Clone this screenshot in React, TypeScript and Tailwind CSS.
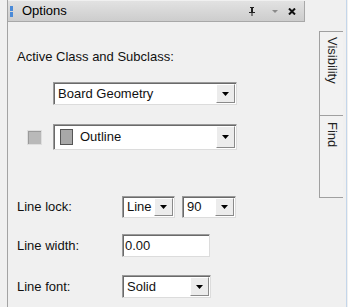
import React from 'react';

const Arrow = () => (
  <div className="w-[19px] h-full flex items-center justify-center bg-[#ececec] border-l border-t border-l-white border-t-white border-r border-b border-r-[#8a8a8a] border-b-[#8a8a8a]">
    <svg width="7" height="4" viewBox="0 0 7 4">
      <path d="M0 0h7L3.5 4z" fill="#000" />
    </svg>
  </div>
);

const Combo: React.FC<{ w: string; h: string; children: React.ReactNode }> = ({ w, h, children }) => (
  <div className={`${w} ${h} flex bg-white border border-t-[#9a9a9a] border-l-[#9a9a9a] border-r-[#dcdcdc] border-b-[#dcdcdc] shadow-[inset_1px_1px_0_#6a6a6a]`}>
    <div className="flex-1 flex items-center pl-[4px] overflow-hidden whitespace-nowrap">{children}</div>
    <div className="py-[1px] pr-[1px]">
      <Arrow />
    </div>
  </div>
);

const Row: React.FC<{ label: string; children: React.ReactNode; className?: string }> = ({ label, children, className }) => (
  <div className={`flex items-center ${className ?? ''}`}>
    <div className="w-[106px] pl-[9px]">{label}</div>
    {children}
  </div>
);

export default function App() {
  return (
    <div className="w-[348px] h-[307px] bg-[#f0f0f0] flex font-['Liberation_Sans',Arial,sans-serif] text-[13px] leading-[16px] text-[#111] overflow-hidden">
      <div className="w-[7px]" />
      <div className="w-px bg-[#a3a3a3]" />

      {/* Options panel */}
      <div className="w-[310px] flex flex-col">
        <div className="mt-px h-[21px] w-[297px] flex items-center bg-gradient-to-b from-[#e2e2e2] to-[#cdcdcd] border-r border-b border-[#a8a8a8]">
          <div className="ml-[2px] w-[3px] flex flex-col gap-[1px]">
            <div className="h-[5px] bg-[#4a8ad8]" />
            <div className="h-[5px] bg-[#4a8ad8]" />
          </div>
          <span className="ml-[9px] text-black">Options</span>
          <div className="ml-auto flex items-center pr-[8px]">
            <svg width="8" height="9" viewBox="0 0 8 9">
              <path d="M2 0h4v1H5v4h2v1H4.5v3h-1V6H1V5h2V1H2z" fill="#222" />
            </svg>
            <svg className="ml-[16px]" width="6" height="3" viewBox="0 0 6 3">
              <path d="M0 0h6L3 3z" fill="#8a8a8a" />
            </svg>
            <svg className="ml-[10px]" width="8" height="7" viewBox="0 0 8 7">
              <path d="M1 0.5l6 6M7 0.5l-6 6" stroke="#111" strokeWidth="2" />
            </svg>
          </div>
        </div>

        <div className="mt-[27px] pl-[9px]">Active Class and Subclass:</div>

        <div className="mt-[17px] pl-[45px]">
          <Combo w="w-[184px]" h="h-[23px]">Board Geometry</Combo>
        </div>

        <div className="mt-[19px] flex items-center">
          <div className="ml-[19px] w-[15px] h-[15px] bg-[#b9b9b9] border border-[#dedede] shadow-[inset_1px_1px_0_#9a9a9a]" />
          <div className="ml-[11px]">
            <Combo w="w-[184px]" h="h-[26px]">
              <div className="w-[13px] h-[16px] bg-[#a8a8a8] border border-[#555] mr-[7px] ml-[2px]" />
              Outline
            </Combo>
          </div>
        </div>

        <Row label="Line lock:" className="mt-[46px]">
          <div className="ml-[8px] flex gap-[7px]">
            <Combo w="w-[53px]" h="h-[22px]">Line</Combo>
            <Combo w="w-[54px]" h="h-[22px]">90</Combo>
          </div>
        </Row>

        <Row label="Line width:" className="mt-[16px]">
          <div className="ml-[8px] w-[88px] h-[23px] flex items-center pl-[2px] bg-white border border-t-[#9a9a9a] border-l-[#9a9a9a] border-r-[#dcdcdc] border-b-[#dcdcdc] shadow-[inset_1px_1px_0_#6a6a6a]">
            0.00
          </div>
        </Row>

        <Row label="Line font:" className="mt-[18px]">
          <div className="ml-[8px]">
            <Combo w="w-[89px]" h="h-[23px]">Solid</Combo>
          </div>
        </Row>
      </div>

      {/* Side tabs */}
      <div className="w-[28px] flex flex-col pt-[31px]">
        <div className="ml-px w-[24px] h-[84px] border-l border-t border-[#a0a0a0] bg-[#f2f2f2] flex justify-start pt-[5px] [writing-mode:vertical-rl] items-center">
          <span className="text-[#222]">Visibility</span>
        </div>
        <div className="ml-px w-[24px] h-[83px] border-l border-t border-b border-[#a0a0a0] bg-[#f2f2f2] flex justify-start pt-[6px] [writing-mode:vertical-rl] items-center">
          <span className="text-[#222]">Find</span>
        </div>
      </div>
      <div className="w-px bg-[#c4d6ea]" />
      <div className="flex-1" />
    </div>
  );
}
